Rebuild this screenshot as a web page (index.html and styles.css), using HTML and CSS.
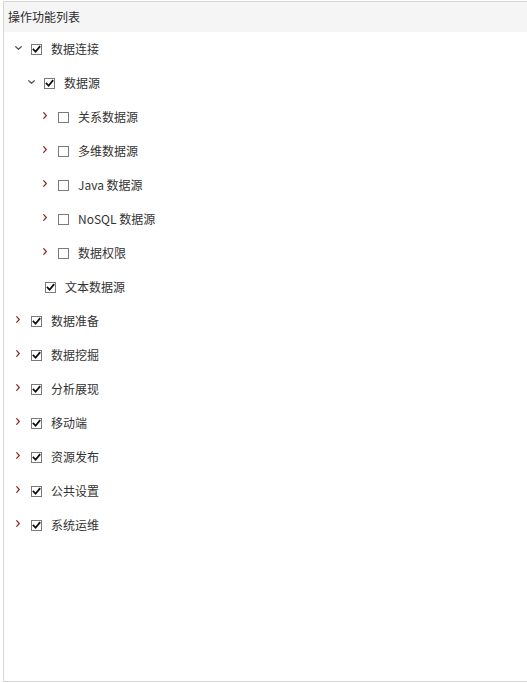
FILE: index.html
```html
<!DOCTYPE html>
<html lang="zh-CN">
<head>
<meta charset="utf-8">
<title>操作功能列表</title>
<link rel="stylesheet" href="styles.css">
</head>
<body>
<div class="panel">
  <div class="panel-header">操作功能列表</div>
  <ul class="tree">
    <li class="row lv0"><span class="sw down"><svg viewBox="0 0 7 4" width="7" height="4"><path d="M0.7 0.7 L3.5 3.3 L6.3 0.7" /></svg></span><span class="cb on"><svg viewBox="0 0 9 9" width="9" height="9"><path d="M1.5 4.5 L3.6 6.7 L7.6 1.8" /></svg></span><span class="label">数据连接</span></li>
    <li class="row lv1"><span class="sw down"><svg viewBox="0 0 7 4" width="7" height="4"><path d="M0.7 0.7 L3.5 3.3 L6.3 0.7" /></svg></span><span class="cb on"><svg viewBox="0 0 9 9" width="9" height="9"><path d="M1.5 4.5 L3.6 6.7 L7.6 1.8" /></svg></span><span class="label">数据源</span></li>
    <li class="row lv2"><span class="sw right"><svg viewBox="0 0 4 7" width="4" height="7"><path d="M0.7 0.7 L3.3 3.5 L0.7 6.3" /></svg></span><span class="cb"></span><span class="label">关系数据源</span></li>
    <li class="row lv2"><span class="sw right"><svg viewBox="0 0 4 7" width="4" height="7"><path d="M0.7 0.7 L3.3 3.5 L0.7 6.3" /></svg></span><span class="cb"></span><span class="label">多维数据源</span></li>
    <li class="row lv2"><span class="sw right"><svg viewBox="0 0 4 7" width="4" height="7"><path d="M0.7 0.7 L3.3 3.5 L0.7 6.3" /></svg></span><span class="cb"></span><span class="label">Java 数据源</span></li>
    <li class="row lv2"><span class="sw right"><svg viewBox="0 0 4 7" width="4" height="7"><path d="M0.7 0.7 L3.3 3.5 L0.7 6.3" /></svg></span><span class="cb"></span><span class="label">NoSQL 数据源</span></li>
    <li class="row lv2"><span class="sw right"><svg viewBox="0 0 4 7" width="4" height="7"><path d="M0.7 0.7 L3.3 3.5 L0.7 6.3" /></svg></span><span class="cb"></span><span class="label">数据权限</span></li>
    <li class="row lv2 leaf"><span class="cb on"><svg viewBox="0 0 9 9" width="9" height="9"><path d="M1.5 4.5 L3.6 6.7 L7.6 1.8" /></svg></span><span class="label">文本数据源</span></li>
    <li class="row lv0"><span class="sw right"><svg viewBox="0 0 4 7" width="4" height="7"><path d="M0.7 0.7 L3.3 3.5 L0.7 6.3" /></svg></span><span class="cb on"><svg viewBox="0 0 9 9" width="9" height="9"><path d="M1.5 4.5 L3.6 6.7 L7.6 1.8" /></svg></span><span class="label">数据准备</span></li>
    <li class="row lv0"><span class="sw right"><svg viewBox="0 0 4 7" width="4" height="7"><path d="M0.7 0.7 L3.3 3.5 L0.7 6.3" /></svg></span><span class="cb on"><svg viewBox="0 0 9 9" width="9" height="9"><path d="M1.5 4.5 L3.6 6.7 L7.6 1.8" /></svg></span><span class="label">数据挖掘</span></li>
    <li class="row lv0"><span class="sw right"><svg viewBox="0 0 4 7" width="4" height="7"><path d="M0.7 0.7 L3.3 3.5 L0.7 6.3" /></svg></span><span class="cb on"><svg viewBox="0 0 9 9" width="9" height="9"><path d="M1.5 4.5 L3.6 6.7 L7.6 1.8" /></svg></span><span class="label">分析展现</span></li>
    <li class="row lv0"><span class="sw right"><svg viewBox="0 0 4 7" width="4" height="7"><path d="M0.7 0.7 L3.3 3.5 L0.7 6.3" /></svg></span><span class="cb on"><svg viewBox="0 0 9 9" width="9" height="9"><path d="M1.5 4.5 L3.6 6.7 L7.6 1.8" /></svg></span><span class="label">移动端</span></li>
    <li class="row lv0"><span class="sw right"><svg viewBox="0 0 4 7" width="4" height="7"><path d="M0.7 0.7 L3.3 3.5 L0.7 6.3" /></svg></span><span class="cb on"><svg viewBox="0 0 9 9" width="9" height="9"><path d="M1.5 4.5 L3.6 6.7 L7.6 1.8" /></svg></span><span class="label">资源发布</span></li>
    <li class="row lv0"><span class="sw right"><svg viewBox="0 0 4 7" width="4" height="7"><path d="M0.7 0.7 L3.3 3.5 L0.7 6.3" /></svg></span><span class="cb on"><svg viewBox="0 0 9 9" width="9" height="9"><path d="M1.5 4.5 L3.6 6.7 L7.6 1.8" /></svg></span><span class="label">公共设置</span></li>
    <li class="row lv0"><span class="sw right"><svg viewBox="0 0 4 7" width="4" height="7"><path d="M0.7 0.7 L3.3 3.5 L0.7 6.3" /></svg></span><span class="cb on"><svg viewBox="0 0 9 9" width="9" height="9"><path d="M1.5 4.5 L3.6 6.7 L7.6 1.8" /></svg></span><span class="label">系统运维</span></li>
  </ul>
</div>
</body>
</html>
```

FILE: styles.css
```css
html, body {
  margin: 0;
  padding: 0;
  background: #ffffff;
}

body {
  font-family: "Noto Sans CJK SC", "Noto Sans", sans-serif;
  font-size: 12px;
  color: #333333;
}

.panel {
  margin: 1px 0 0 3px;
  width: 524px;
  height: 679px;
  border: 1px solid #d6d6d6;
  border-right: none;
  background: #ffffff;
  display: flex;
  flex-direction: column;
}

.panel-header {
  height: 30px;
  line-height: 30px;
  padding-left: 4px;
  background: #f5f5f5;
  color: #2b2b2b;
  font-size: 12px;
}

.tree {
  list-style: none;
  margin: 0;
  padding: 0;
}

.row {
  display: flex;
  align-items: center;
  height: 34px;
}

.lv0 { padding-left: 7px; }
.lv1 { padding-left: 20px; }
.lv2 { padding-left: 34px; }

.sw {
  width: 14px;
  height: 14px;
  margin-right: 6px;
  display: flex;
  align-items: center;
  justify-content: center;
  margin-top: -3px;
}

.sw svg path {
  fill: none;
  stroke-width: 1.2;
  stroke-linecap: round;
  stroke-linejoin: round;
}

.sw.down svg path { stroke: #555555; }
.sw.right svg path { stroke: #8e2a20; }

.leaf .cb { margin-left: 7px; }

.cb {
  box-sizing: border-box;
  width: 11px;
  height: 11px;
  border: 1px solid #7a7a7a;
  background: #ffffff;
  display: flex;
  align-items: center;
  justify-content: center;
  margin-right: 9px;
}

.cb svg path {
  fill: none;
  stroke: #111111;
  stroke-width: 1.8;
  stroke-linecap: square;
  stroke-linejoin: miter;
}

.label {
  color: #333333;
  font-size: 12px;
  line-height: 16px;
}
```
